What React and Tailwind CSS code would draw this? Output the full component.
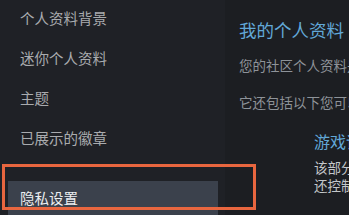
export default function App() {
    const items = ["个人资料背景", "迷你个人资料", "主题", "已展示的徽章"];

    return (
        <div
            className="relative flex h-[215px] w-[349px] overflow-hidden bg-[#1c1e22]"
            style={{ fontFamily: '"Noto Sans CJK SC", "Noto Sans", sans-serif' }}
        >
            {/* sidebar */}
            <aside className="flex w-[225px] shrink-0 flex-col bg-[#1f2126]">
                <div className="-mt-[2px] flex flex-col">
                    {items.map((item) => (
                        <div
                            key={item}
                            className="flex h-[40px] items-center whitespace-nowrap pl-[20px] text-[14.5px] text-[#a9abae]"
                        >
                            {item}
                        </div>
                    ))}
                </div>
                <div className="ml-[8px] mt-[23px] flex h-[36px] w-[210px] items-center bg-[#3b414c] pl-[12px] text-[14.5px] text-[#eceef0]">
                    隐私设置
                </div>
            </aside>

            {/* content */}
            <main className="flex-1 overflow-hidden whitespace-nowrap pl-[14px] pt-[18px]">
                <h2 className="text-[17.5px] leading-[24px] text-[#62a8d8]">
                    我的个人资料
                </h2>
                <p className="mt-[13px] text-[13.5px] leading-[20px] text-[#8e9399]">
                    您的社区个人资料是他人看到您的地方
                </p>
                <p className="mt-[17px] text-[13.5px] leading-[20px] text-[#8e9399]">
                    它还包括以下您可以控制的内容
                </p>
                <div className="ml-[75px] mt-[18px]">
                    <h3 className="text-[16px] leading-[22px] text-[#62a8d8]">
                        游戏详情
                    </h3>
                    <p className="mt-[6px] text-[13.5px] leading-[18px] text-[#c4c7ca]">
                        该部分包括您的游戏
                    </p>
                    <p className="text-[13.5px] leading-[18px] text-[#c4c7ca]">
                        还控制他人能否看到
                    </p>
                </div>
            </main>

            {/* annotation box */}
            <div className="pointer-events-none absolute left-[2px] top-[164px] h-[46px] w-[254px] border-[3px] border-[#e8663f]" />
        </div>
    );
}
